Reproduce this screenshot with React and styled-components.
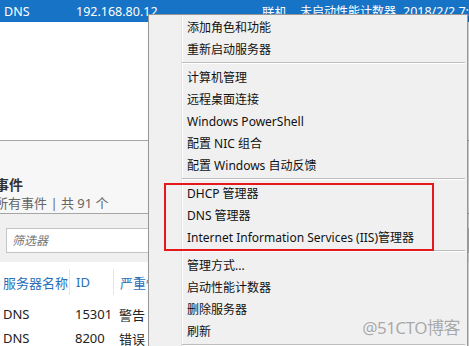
import styled, { createGlobalStyle } from "styled-components"

const GlobalStyle = createGlobalStyle`
body {
  margin: 0;
  background: #fff;
  font-family: "Noto Sans", "Noto Sans CJK SC", sans-serif;
  overflow: hidden;
}
`

const Page = styled.div`
position: relative;
width: 469px;
height: 346px;
overflow: hidden;
background: #fff;
`
const TopRow = styled.div`
display: flex;
align-items: center;
height: 22px;
background: #1773c6;
color: #fff;
font-size: 12.5px;
`
const TopCell = styled.div`
width: ${p => p.w}px;
flex: none;
box-sizing: border-box;
white-space: nowrap;
overflow: hidden;
padding-left: ${p => p.pl || 0}px;
font-size: ${p => p.fs || "inherit"};
`
const Blank = styled.div`
height: 118px;
`
const Section = styled.div`
height: 73px;
border-top: 1px solid #a6a6a6;
background: #f7f7f7;
display: flex;
flex-direction: column;
justify-content: flex-end;
box-sizing: border-box;
margin-left: -5px;
padding-bottom: 1px;
`
const SectionTitle = styled.div`
font-size: 14px;
font-weight: bold;
color: #333;
line-height: 19px;
`
const SectionSub = styled.div`
font-size: 13px;
color: #666;
line-height: 18px;
`
const FilterBar = styled.div`
height: 49px;
border-top: 1px solid #a6a6a6;
background: #f0f0f0;
padding: 14px 0 0 6px;
box-sizing: border-box;
`
const FilterInput = styled.div`
height: 25px;
border: 1px solid #c4c4c4;
background: #fff;
box-sizing: border-box;
font-size: 12px;
font-style: italic;
color: #777;
line-height: 23px;
padding-left: 5px;
`
const Table = styled.div`
background: #fff;
`
const Row = styled.div`
display: grid;
grid-template-columns: 69px 44px 1fr;
height: ${p => p.h}px;
align-items: center;
font-size: 13px;
color: ${p => (p.head ? "#2a6fb8" : "#222")};
`
const Cell = styled.div`
padding-left: ${p => (p.first ? 3 : 6)}px;
height: ${p => (p.div ? "26px" : "100%")};
display: flex;
align-items: center;
white-space: nowrap;
border-left: ${p => (p.div ? "1px solid #e6e6e6" : "none")};
box-sizing: border-box;
`

const Menu = styled.div`
position: absolute;
left: 148px;
top: 14px;
width: 320px;
height: 360px;
box-sizing: border-box;
border: 1px solid #979797;
padding-top: 2px;
background: linear-gradient(to right, #f0f0f0 32px, #e2e2e2 32px, #e2e2e2 33px, #fff 33px, #fff 34px, #f0f0f0 34px);
box-shadow: 2px 2px 3px rgba(0, 0, 0, 0.25);
font-size: 12px;
color: #111;
`
const Item = styled.div`
height: 22px;
line-height: 22px;
padding-left: 38px;
white-space: nowrap;
`
const Separator = styled.div`
height: 5px;
margin-left: 33px;
margin-right: 2px;
&::before {
  content: "";
  display: block;
  margin-top: 1px;
  height: 1px;
  background: #bdbdbd;
  border-bottom: 1px solid #fff;
}
`
const Marked = styled.div`
position: relative;
&::after {
  content: "";
  position: absolute;
  left: 15px;
  right: 33px;
  top: 0;
  bottom: -2px;
  border: 2px solid #e5191c;
}
`
const Watermark = styled.div`
position: absolute;
right: 9px;
top: 314px;
font-size: 17px;
color: #a8a8a8;
letter-spacing: -0.5px;
text-shadow: 0 0 1px #fff;
`

const MenuItems = () => (
    <Menu>
        <Item>添加角色和功能</Item>
        <Item>重新启动服务器</Item>
        <Separator/>
        <Item>计算机管理</Item>
        <Item>远程桌面连接</Item>
        <Item>Windows PowerShell</Item>
        <Item>配置 NIC 组合</Item>
        <Item>配置 Windows 自动反馈</Item>
        <Separator/>
        <Marked>
            <Item>DHCP 管理器</Item>
            <Item>DNS 管理器</Item>
            <Item>Internet Information Services (IIS)管理器</Item>
        </Marked>
        <Separator/>
        <Item>管理方式...</Item>
        <Item>启动性能计数器</Item>
        <Item>删除服务器</Item>
        <Item>刷新</Item>
        <Separator/>
    </Menu>
)

const App = () => {
    return (
        <Page>
            <GlobalStyle/>
            <TopRow>
                <TopCell w={76} pl={4}>DNS</TopCell>
                <TopCell w={186}>192.168.80.12</TopCell>
                <TopCell w={38}>联机</TopCell>
                <TopCell w={103} fs="12px">未启动性能计数器</TopCell>
                <TopCell w={66}>2018/2/2 7:</TopCell>
            </TopRow>
            <Blank/>
            <Section>
                <SectionTitle>事件</SectionTitle>
                <SectionSub>所有事件 | 共 91 个</SectionSub>
            </Section>
            <FilterBar>
                <FilterInput>筛选器</FilterInput>
            </FilterBar>
            <Table>
                <Row head h={40}>
                    <Cell first>服务器名称</Cell>
                    <Cell div>ID</Cell>
                    <Cell div>严重性</Cell>
                </Row>
                <Row h={24}>
                    <Cell first>DNS</Cell>
                    <Cell>15301</Cell>
                    <Cell>警告</Cell>
                </Row>
                <Row h={24}>
                    <Cell first>DNS</Cell>
                    <Cell>8200</Cell>
                    <Cell>错误</Cell>
                </Row>
            </Table>
            <MenuItems/>
            <Watermark>@51CTO博客</Watermark>
        </Page>
    )
}

export default App
